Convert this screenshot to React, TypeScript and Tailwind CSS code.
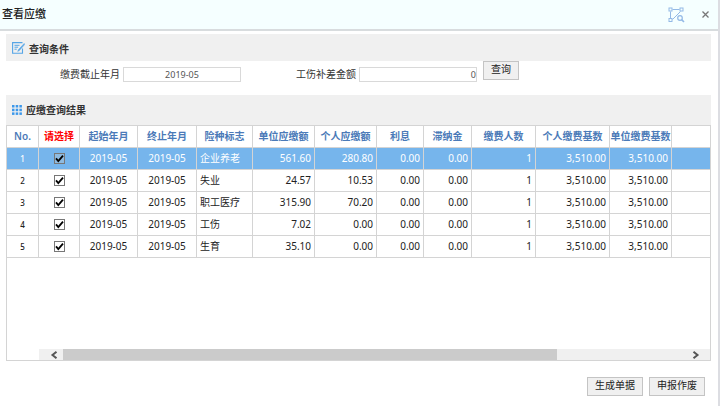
import { useState } from "react";

type Row = {
  start: string;
  end: string;
  insurance: string;
  unitDue: string;
  personDue: string;
  interest: string;
  lateFee: string;
  people: number;
  personBase: string;
  unitBase: string;
};

const rows: Row[] = [
  ["企业养老", "561.60", "280.80"],
  ["失业", "24.57", "10.53"],
  ["职工医疗", "315.90", "70.20"],
  ["工伤", "7.02", "0.00"],
  ["生育", "35.10", "0.00"],
].map(([insurance, unitDue, personDue]) => ({
  start: "2019-05",
  end: "2019-05",
  insurance,
  unitDue,
  personDue,
  interest: "0.00",
  lateFee: "0.00",
  people: 1,
  personBase: "3,510.00",
  unitBase: "3,510.00",
}));

const columns = [
  { title: "No.", width: "w-[32px]" },
  { title: "请选择", width: "w-[41px]" },
  { title: "起始年月", width: "w-[58px]" },
  { title: "终止年月", width: "w-[59px]" },
  { title: "险种标志", width: "w-[56px]" },
  { title: "单位应缴额", width: "w-[62px]" },
  { title: "个人应缴额", width: "w-[62px]" },
  { title: "利息", width: "w-[47px]" },
  { title: "滞纳金", width: "w-[48px]" },
  { title: "缴费人数", width: "w-[64px]" },
  { title: "个人缴费基数", width: "w-[74px]" },
  { title: "单位缴费基数", width: "w-[62px]" },
  { title: "", width: "w-auto" },
];

const cell =
  "border-r border-b border-[#d4d4d4] p-0 whitespace-nowrap last:border-r-0";
const numberCell = `${cell} pr-[3px] text-right`;
const pushButton =
  "h-[19px] border border-[#c4c4c4] bg-[#f0f0f0] pb-[2px] text-[10px] leading-[15px] text-[#222]";

function SelectRegionIcon() {
  return (
    <svg width="17" height="16" viewBox="0 0 17 16" fill="none" stroke="#93b9e6">
      <path d="M4.5 2.5h7M2.5 4.5v7M12.5 4.5L4.5 12.5" />
      <rect x="1" y="1" width="3" height="3" />
      <rect x="12" y="1" width="3" height="3" />
      <rect x="1" y="11.5" width="3" height="3" />
      <circle cx="12" cy="11" r="2.3" strokeWidth="1.2" />
      <path d="M13.6 12.6l2.4 2.4" strokeWidth="1.6" />
    </svg>
  );
}

function EditIcon() {
  return (
    <svg width="13" height="12" viewBox="0 0 13 12" fill="none" stroke="#55a5e6">
      <path d="M10.5 6.5v4.8H.6V.6h9.9" strokeWidth="1.1" />
      <path d="M2.5 3.3h5M2.5 5.2h3.6M2.5 7.2h2.2" />
      <path d="M12.2 1.4L6.4 7.8l-.7 1.6 1.6-.8 5.3-6z" fill="#55a5e6" strokeWidth=".5" />
    </svg>
  );
}

function GridIcon() {
  return (
    <svg width="10" height="10" viewBox="0 0 10 10" fill="#3d98ea">
      {[0, 3.7, 7.4].map((y) =>
        [0, 3.7, 7.4].map((x) => (
          <rect key={`${x}-${y}`} x={x} y={y} width="2.5" height="2.5" />
        ))
      )}
    </svg>
  );
}

function RowCheckbox({ label, shaded }: { label: string; shaded: boolean }) {
  const [checked, setChecked] = useState(true);

  return (
    <span className="grid place-items-center">
      <input
        type="checkbox"
        aria-label={label}
        checked={checked}
        onChange={(e) => setChecked(e.target.checked)}
        className={`col-start-1 row-start-1 size-[11px] appearance-none border border-[#777] ${
          shaded ? "bg-[#8fbbe0]" : "bg-white"
        }`}
      />
      {checked && (
        <svg
          width="9"
          height="9"
          viewBox="0 0 9 9"
          fill="none"
          stroke="#000"
          strokeWidth="1.8"
          className="pointer-events-none col-start-1 row-start-1"
        >
          <path d="M1 4.4l2.3 2.7L8 1.6" />
        </svg>
      )}
    </span>
  );
}

export default function App() {
  const [month, setMonth] = useState("2019-05");
  const [amount, setAmount] = useState("0");
  const [selected, setSelected] = useState(0);

  return (
    <div className="min-h-screen border-r-2 border-[#dcdde2] bg-white font-['Noto_Sans','Noto_Sans_CJK_SC',sans-serif] text-[10px] text-[#333]">
      <header className="flex h-[31px] items-center border-b-2 border-[#d8dcde] bg-[#f5ffff] pr-2 pl-[2px]">
        <h1 className="text-[11px] font-medium text-[#222]">查看应缴</h1>
        <button type="button" aria-label="框选" className="ml-auto">
          <SelectRegionIcon />
        </button>
        <button type="button" aria-label="关闭" className="ml-4">
          <svg width="9" height="9" viewBox="0 0 9 9" stroke="#777" strokeWidth="1.3">
            <path d="M1.5 1.5l6 6M7.5 1.5l-6 6" />
          </svg>
        </button>
      </header>

      <main className="pt-[3px] pr-[7px] pl-[6px]">
        <section>
          <h2 className="flex h-[27px] items-center gap-[4px] bg-[#f0f0f0] pl-[6px] font-semibold">
            <EditIcon />
            <span className="pt-[3px]">查询条件</span>
          </h2>
          <form
            className="flex h-[34px] items-start pl-[54px]"
            onSubmit={(e) => e.preventDefault()}
          >
            <label htmlFor="month" className="mt-[6px] w-[63px] leading-[14px]">
              缴费截止年月
            </label>
            <input
              id="month"
              value={month}
              onChange={(e) => setMonth(e.target.value)}
              className="mt-[6px] h-[15px] w-[118px] border border-[#d9d9d9] text-center text-[9px] text-[#555]"
            />
            <label htmlFor="amount" className="mt-[6px] ml-[55px] w-[63px] leading-[14px]">
              工伤补差金额
            </label>
            <input
              id="amount"
              value={amount}
              onChange={(e) => setAmount(e.target.value)}
              className="mt-[6px] h-[15px] w-[118px] border border-[#d9d9d9] text-right text-[9px] text-[#555]"
            />
            <button type="submit" className={`${pushButton} ml-[6px] w-[36px]`}>
              查询
            </button>
          </form>
        </section>

        <section>
          <h2 className="flex h-[30px] items-center gap-[4px] bg-[#f0f0f0] pl-[6px] font-semibold">
            <GridIcon />
            应缴查询结果
          </h2>
          <div className="flex h-[236px] flex-col justify-between border border-t-0 border-[#d4d4d4]">
            <table className="w-full table-fixed border-separate border-spacing-0">
              <colgroup>
                {columns.map((c, i) => (
                  <col key={i} className={c.width} />
                ))}
              </colgroup>
              <thead>
                <tr className="h-[23px]">
                  {columns.map((c, i) => (
                    <th
                      key={i}
                      className={`${cell} overflow-hidden border-t font-semibold ${
                        i === 1 ? "text-[#ff0000]" : "text-[#4b7ab8]"
                      }`}
                    >
                      {c.title}
                    </th>
                  ))}
                </tr>
              </thead>
              <tbody>
                {rows.map((r, i) => (
                  <tr
                    key={r.insurance}
                    onClick={() => setSelected(i)}
                    className={`h-[22px] ${
                      selected === i ? "bg-[#76b5ec] text-white" : "text-[#222]"
                    }`}
                  >
                    <td className={`${cell} text-center text-[8px] font-medium`}>{i + 1}</td>
                    <td className={cell}>
                      <RowCheckbox label={r.insurance} shaded={selected === i} />
                    </td>
                    <td className={`${cell} text-center`}>{r.start}</td>
                    <td className={`${cell} text-center`}>{r.end}</td>
                    <td className={`${cell} pl-[3px]`}>{r.insurance}</td>
                    <td className={numberCell}>{r.unitDue}</td>
                    <td className={numberCell}>{r.personDue}</td>
                    <td className={numberCell}>{r.interest}</td>
                    <td className={numberCell}>{r.lateFee}</td>
                    <td className={numberCell}>{r.people}</td>
                    <td className={numberCell}>{r.personBase}</td>
                    <td className={numberCell}>{r.unitBase}</td>
                    <td className={cell} />
                  </tr>
                ))}
              </tbody>
            </table>
            <div className="ml-[32px] flex h-[11px] items-center bg-[#f0f0f0]">
              <button type="button" aria-label="向左滚动" className="flex w-6 justify-end pr-[5px]">
                <svg width="8" height="8" viewBox="0 0 8 8" fill="none" stroke="#555" strokeWidth="2">
                  <path d="M6.5 .8L2.5 4l4 3.2" />
                </svg>
              </button>
              <div className="h-full flex-1">
                <div className="h-full w-[79%] bg-[#cbcbcb]" />
              </div>
              <button type="button" aria-label="向右滚动" className="w-[22px] pl-1">
                <svg width="8" height="8" viewBox="0 0 8 8" fill="none" stroke="#555" strokeWidth="2">
                  <path d="M1.5 .8L5.5 4l-4 3.2" />
                </svg>
              </button>
            </div>
          </div>
        </section>

        <footer className="flex justify-end gap-[6px] pt-4 pr-[6px]">
          <button type="button" className={`${pushButton} w-[56px]`}>
            生成单据
          </button>
          <button type="button" className={`${pushButton} w-[56px]`}>
            申报作废
          </button>
        </footer>
      </main>
    </div>
  );
}
